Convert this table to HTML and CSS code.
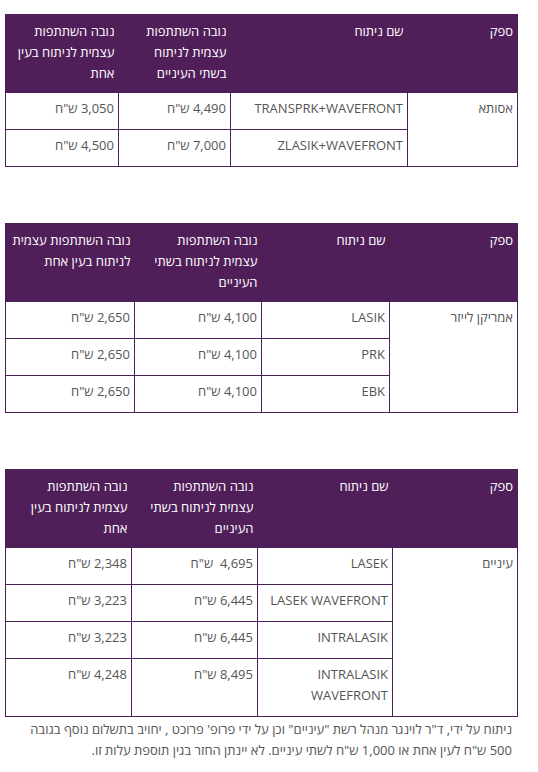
FILE: index.html
```html
<!DOCTYPE html>
<html lang="he" dir="rtl">
<head>
<meta charset="utf-8">
<title>מחירון ניתוחי לייזר</title>
<link rel="stylesheet" href="styles.css">
</head>
<body>
<main class="content">
  <table class="prices t1">
    <colgroup>
      <col class="c1"><col class="c2"><col class="c3"><col class="c4">
    </colgroup>
    <thead>
      <tr>
        <th>ספק</th>
        <th>שם ניתוח</th>
        <th>נובה השתתפות<br>עצמית לניתוח<br>בשתי העיניים</th>
        <th>נובה השתתפות<br>עצמית לניתוח בעין<br>אחת</th>
      </tr>
    </thead>
    <tbody>
      <tr>
        <td rowspan="2" class="vendor">אסותא</td>
        <td>TRANSPRK+WAVEFRONT</td>
        <td>4,490 ש"ח</td>
        <td>3,050 ש"ח</td>
      </tr>
      <tr>
        <td>ZLASIK+WAVEFRONT</td>
        <td>7,000 ש"ח</td>
        <td>4,500 ש"ח</td>
      </tr>
    </tbody>
  </table>

  <table class="prices t2">
    <colgroup>
      <col class="c1"><col class="c2"><col class="c3"><col class="c4">
    </colgroup>
    <thead>
      <tr>
        <th>ספק</th>
        <th>שם ניתוח</th>
        <th>נובה השתתפות<br>עצמית לניתוח בשתי<br>העיניים</th>
        <th>נובה השתתפות עצמית<br>לניתוח בעין אחת</th>
      </tr>
    </thead>
    <tbody>
      <tr>
        <td rowspan="3" class="vendor">אמריקן לייזר</td>
        <td>LASIK</td>
        <td>4,100 ש"ח</td>
        <td>2,650 ש"ח</td>
      </tr>
      <tr>
        <td>PRK</td>
        <td>4,100 ש"ח</td>
        <td>2,650 ש"ח</td>
      </tr>
      <tr>
        <td>EBK</td>
        <td>4,100 ש"ח</td>
        <td>2,650 ש"ח</td>
      </tr>
    </tbody>
  </table>

  <table class="prices t3">
    <colgroup>
      <col class="c1"><col class="c2"><col class="c3"><col class="c4">
    </colgroup>
    <thead>
      <tr>
        <th>ספק</th>
        <th>שם ניתוח</th>
        <th>נובה השתתפות<br>עצמית לניתוח בשתי<br>העיניים</th>
        <th>נובה השתתפות<br>עצמית לניתוח בעין<br>אחת</th>
      </tr>
    </thead>
    <tbody>
      <tr>
        <td rowspan="4" class="vendor">עיניים</td>
        <td>LASEK</td>
        <td>4,695&nbsp; ש"ח</td>
        <td>2,348 ש"ח</td>
      </tr>
      <tr>
        <td>LASEK WAVEFRONT</td>
        <td>6,445 ש"ח</td>
        <td>3,223 ש"ח</td>
      </tr>
      <tr>
        <td>INTRALASIK</td>
        <td>6,445 ש"ח</td>
        <td>3,223 ש"ח</td>
      </tr>
      <tr>
        <td>INTRALASIK WAVEFRONT</td>
        <td>8,495 ש"ח</td>
        <td>4,248 ש"ח</td>
      </tr>
    </tbody>
  </table>
  <p class="note">ניתוח על ידי, ד"ר לוינגר מנהל רשת "עיניים" וכן על ידי פרופ' פרוכט , יחויב בתשלום נוסף בגובה 500 ש"ח לעין אחת או 1,000 ש"ח לשתי עיניים. לא יינתן החזר בגין תוספת עלות זו.</p>
</main>
</body>
</html>
```

FILE: styles.css
```css
html, body {
  margin: 0;
  padding: 0;
  background: #ffffff;
}

body {
  font-family: "Open Sans", "Noto Sans", "DejaVu Sans", sans-serif;
  font-size: 13px;
  color: #555555;
}

.content {
  width: 512px;
  margin: 0 20px 0 6px;
  padding-top: 14px;
  direction: rtl;
}

.prices {
  width: 512px;
  border-collapse: collapse;
  table-layout: fixed;
  border: 1px solid #4e1f58;
  margin: 0 0 56px 0;
}

.prices th {
  background: #501f5a;
  color: #ffffff;
  font-weight: 400;
  text-align: right;
  vertical-align: top;
  line-height: 21px;
  padding: 6px 4px 8px 5px;
  border: 0;
  white-space: nowrap;
}

.prices td {
  text-align: right;
  vertical-align: top;
  line-height: 21px;
  padding: 5px 4px 10px 4px;
  border: 1px solid #4e1f58;
  background: #ffffff;
}

.t1 .c1 { width: 110px; }
.t1 .c2 { width: 177px; }
.t1 .c3 { width: 112px; }
.t1 .c4 { width: 113px; }

.t2 .c1 { width: 128px; }
.t2 .c2 { width: 128px; }
.t2 .c3 { width: 127px; }
.t2 .c4 { width: 129px; }

.t3 .c1 { width: 125px; }
.t3 .c2 { width: 135px; }
.t3 .c3 { width: 126px; }
.t3 .c4 { width: 126px; }

.prices.t3 {
  margin-bottom: 2px;
}

.note {
  margin: 0;
  padding: 0 6px 0 0;
  line-height: 21px;
  text-align: right;
}
```
